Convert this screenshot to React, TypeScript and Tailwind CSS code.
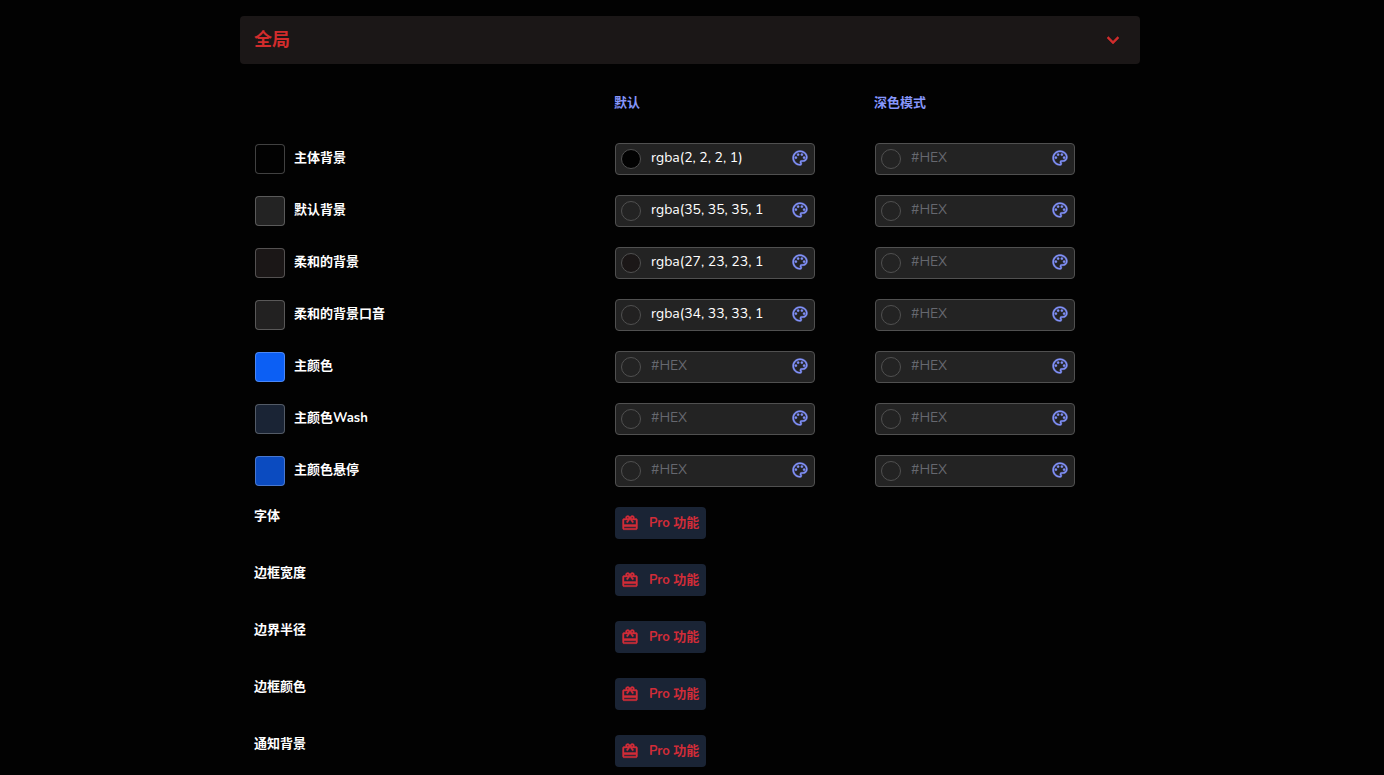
import { useState } from "react";
import { MdKeyboardArrowDown, MdOutlinePalette, MdOutlineRedeem } from "react-icons/md";

type ColorSetting = { id: string; label: string; swatch: string; value: string };

const colorSettings: ColorSetting[] = [
  { id: "body-bg", label: "主体背景", swatch: "rgba(2, 2, 2, 1)", value: "rgba(2, 2, 2, 1)" },
  { id: "default-bg", label: "默认背景", swatch: "rgb(35, 35, 35)", value: "rgba(35, 35, 35, 1" },
  { id: "soft-bg", label: "柔和的背景", swatch: "rgb(27, 23, 23)", value: "rgba(27, 23, 23, 1" },
  { id: "soft-bg-accent", label: "柔和的背景口音", swatch: "rgb(34, 33, 33)", value: "rgba(34, 33, 33, 1" },
  { id: "primary", label: "主颜色", swatch: "#0c5ff4", value: "" },
  { id: "primary-wash", label: "主颜色Wash", swatch: "#1a2435", value: "" },
  { id: "primary-hover", label: "主颜色悬停", swatch: "#0b4bc0", value: "" },
];

const proSettings = ["字体", "边框宽度", "边界半径", "边框颜色", "通知背景"];

// Thickens the visible shapes of a Material icon and skips its empty bounding path.
const boldIcon = "[&>:not([fill=none])]:stroke-current [&>:not([fill=none])]:stroke-[0.5]";

function ColorField({ label, initial, preview }: { label: string; initial: string; preview: string }) {
  const [value, setValue] = useState(initial);
  return (
    <div className="flex h-8 w-[200px] items-center rounded-[4px] border border-[#505050] bg-[#232323] px-[5px]">
      <span
        className="size-5 shrink-0 rounded-full border border-[#505050]"
        style={{ backgroundColor: preview }}
      />
      <input
        type="text"
        aria-label={label}
        placeholder="#HEX"
        value={value}
        onChange={(e) => setValue(e.target.value)}
        className="mb-1 ml-2.5 h-6 min-w-0 flex-1 bg-transparent text-[14px] text-white outline-none placeholder:text-[#66686f]"
      />
      <button type="button" aria-label={`${label} 调色板`} className="mb-0.5 shrink-0 text-[#8090f8]">
        <MdOutlinePalette size={18} className={boldIcon} />
      </button>
    </div>
  );
}

export default function App() {
  const [open, setOpen] = useState(true);
  return (
    <div className="min-h-screen bg-[#020202] pt-4 pr-1 font-['Nunito','Noto_Sans','Noto_Sans_CJK_SC',sans-serif] text-[13px] leading-5 text-white">
      <main className="mx-auto max-w-[900px]">
        <h2>
          <button
            type="button"
            aria-expanded={open}
            onClick={() => setOpen(!open)}
            className="flex h-12 w-full items-center justify-between rounded-[4px] bg-[#1b1717] pr-[15px] pl-3.5 text-[18px] font-bold text-[#d12c2c]"
          >
            全局
            <MdKeyboardArrowDown size={24} className={boldIcon} />
          </button>
        </h2>
        {open && (
          <div className="pr-[15px] pl-3.5">
            <div className="mt-[29px] mb-[30px] grid grid-cols-[360fr_260fr_251fr] font-bold text-[#8696fb]">
              <span className="col-start-2">默认</span>
              <span>深色模式</span>
            </div>
            <div className="flex flex-col gap-5 pl-px">
              {colorSettings.map((s) => (
                <div key={s.id} className="grid grid-cols-[360fr_260fr_250fr]">
                  <div className="flex h-8 items-center gap-[9px] font-bold">
                    <span
                      className="size-[30px] rounded-[4px] border border-white/25"
                      style={{ backgroundColor: s.swatch }}
                    />
                    <span className="mb-0.5">{s.label}</span>
                  </div>
                  <ColorField label={`${s.label} 默认`} initial={s.value} preview={s.value ? s.swatch : "transparent"} />
                  <ColorField label={`${s.label} 深色模式`} initial="" preview="transparent" />
                </div>
              ))}
            </div>
            <div className="mt-[19px] flex flex-col gap-6">
              {proSettings.map((name) => (
                <div key={name} className="grid grid-cols-[361fr_510fr] items-start font-bold">
                  <span>{name}</span>
                  <button
                    type="button"
                    className="mt-px flex h-8 items-center gap-2.5 justify-self-start rounded-[4px] bg-[#1a2435] pr-[7px] pl-1.5 text-[#d12c38]"
                  >
                    <MdOutlineRedeem size={18} className={boldIcon} />
                    Pro 功能
                  </button>
                </div>
              ))}
            </div>
          </div>
        )}
      </main>
    </div>
  );
}
